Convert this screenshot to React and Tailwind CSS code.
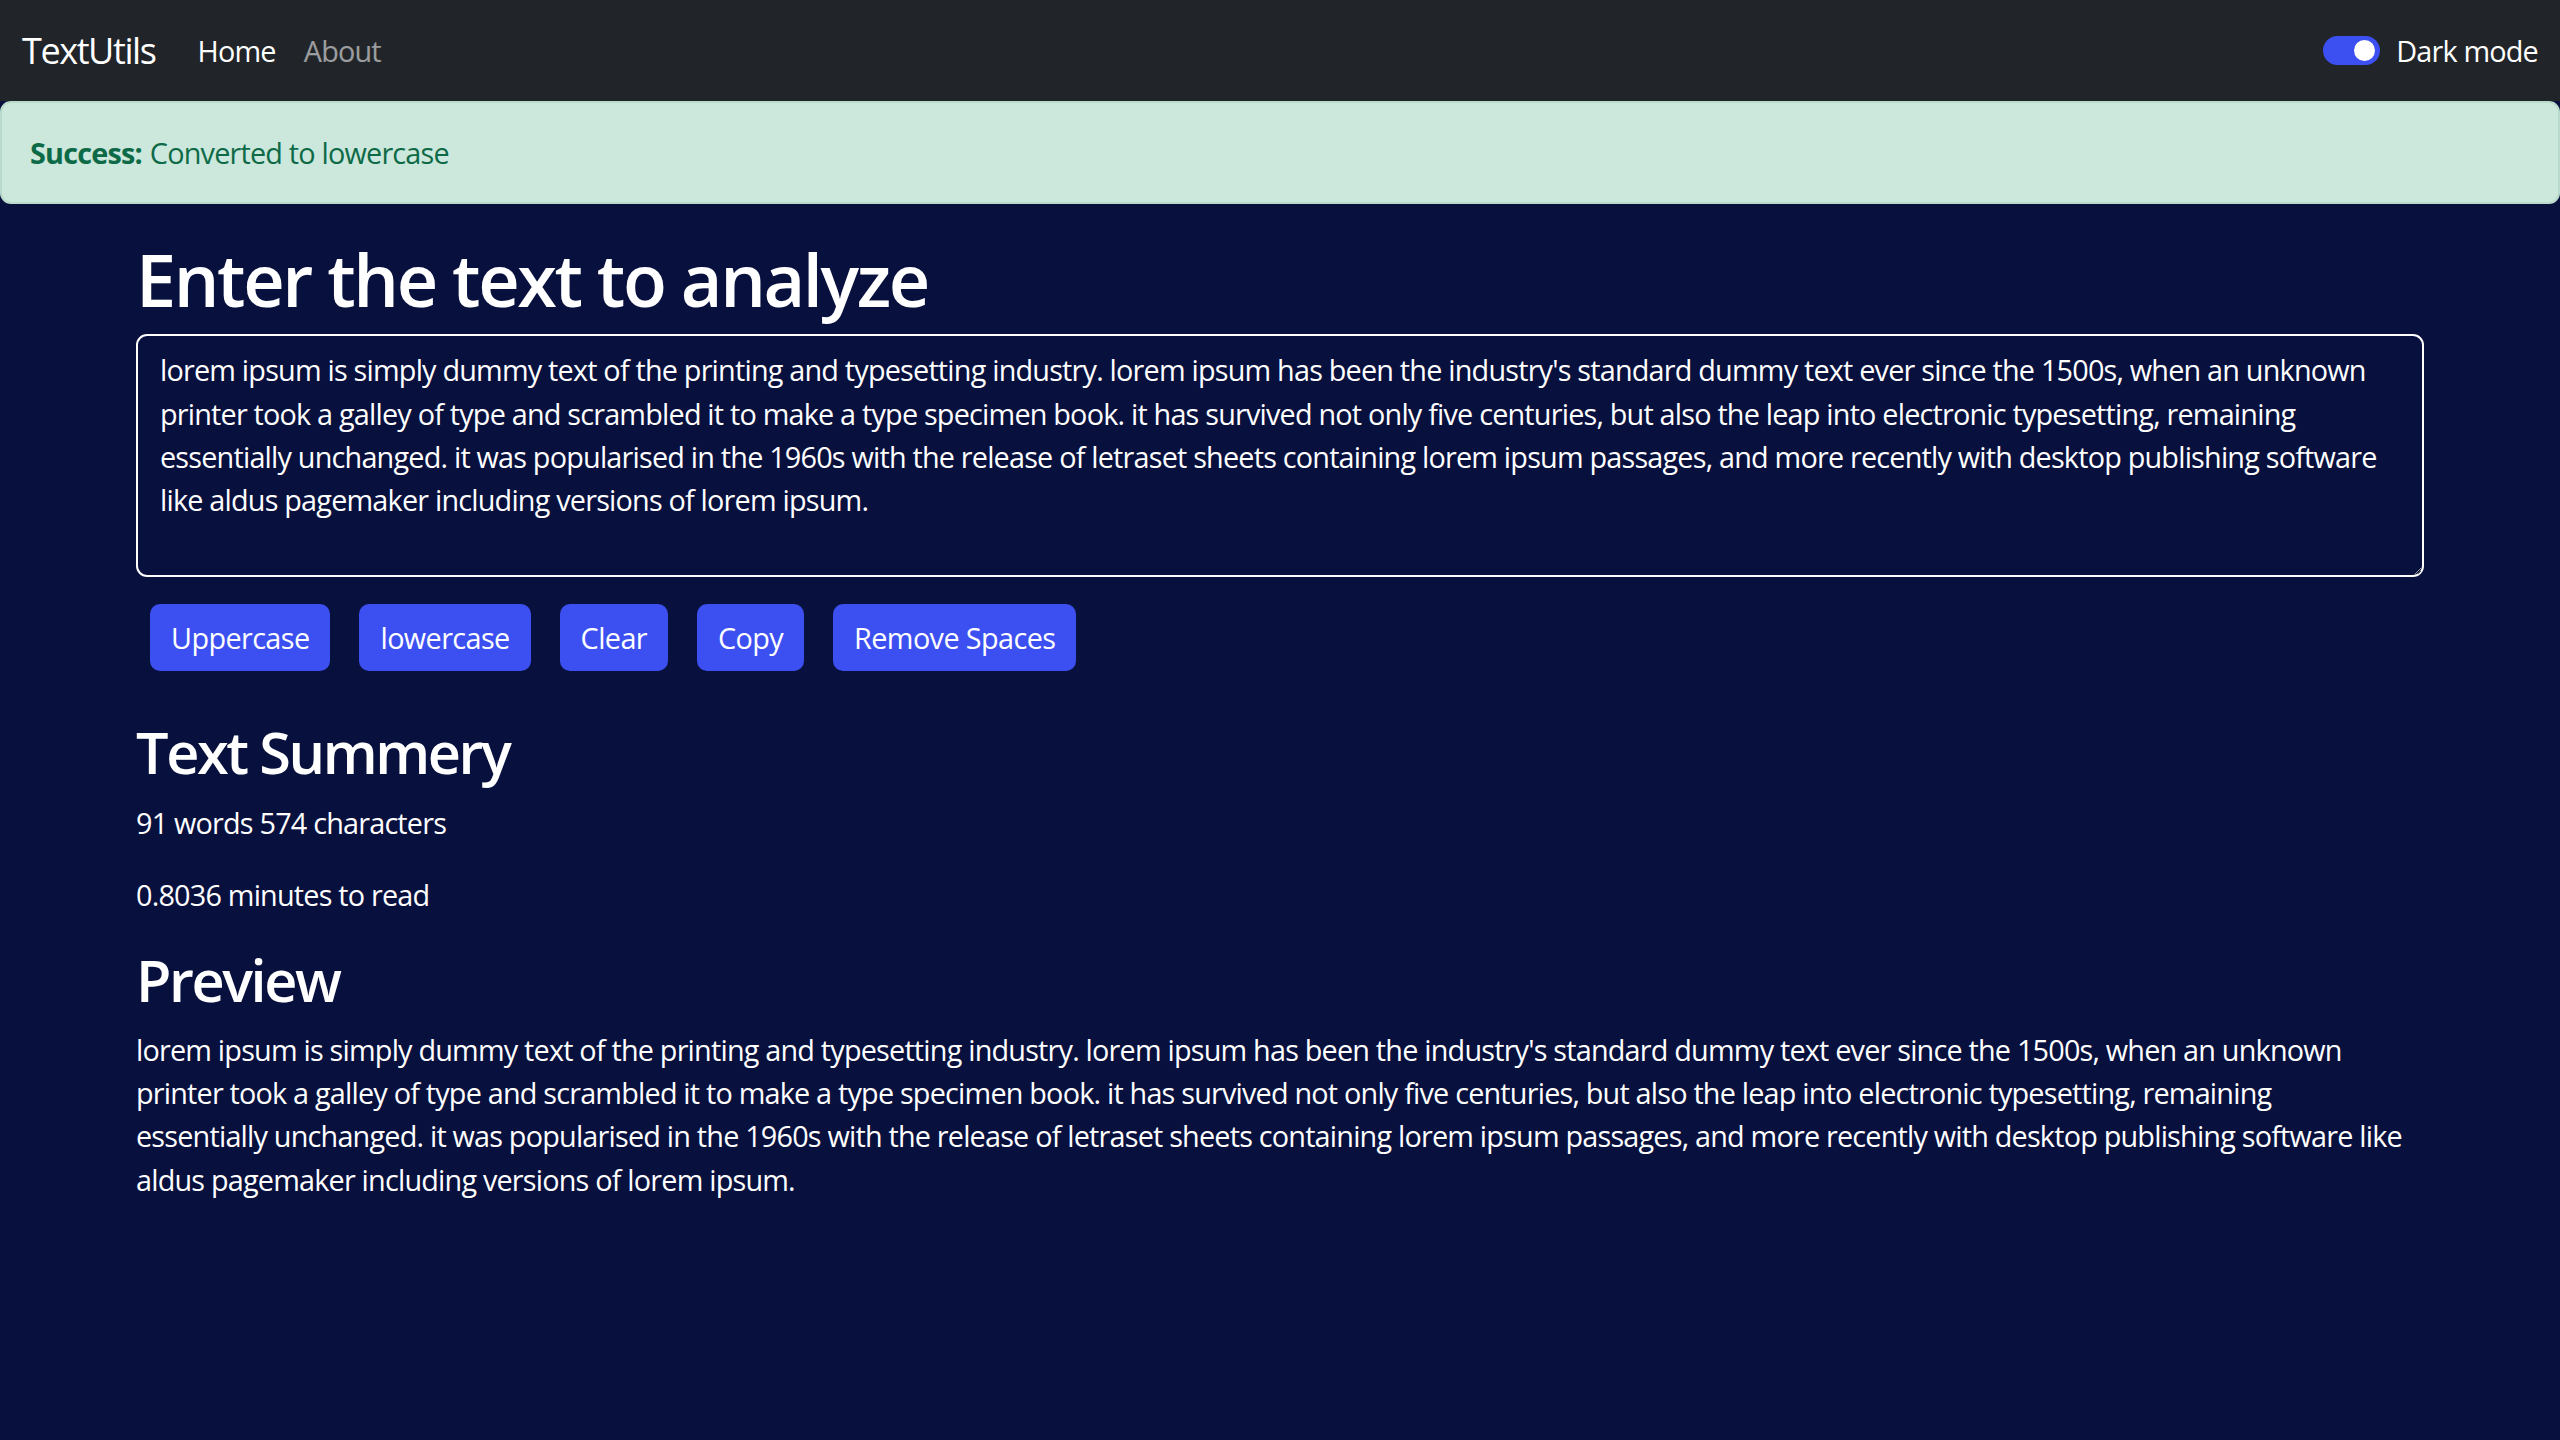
import { useState } from "react";

const LOREM =
  "lorem ipsum is simply dummy text of the printing and typesetting industry. lorem ipsum has been the industry's standard dummy text ever since the 1500s, when an unknown printer took a galley of type and scrambled it to make a type specimen book. it has survived not only five centuries, but also the leap into electronic typesetting, remaining essentially unchanged. it was popularised in the 1960s with the release of letraset sheets containing lorem ipsum passages, and more recently with desktop publishing software like aldus pagemaker including versions of lorem ipsum.";

const BUTTONS = ["Uppercase", "lowercase", "Clear", "Copy", "Remove Spaces"];

function Navbar() {
  return (
    <nav className="flex h-[101px] items-center justify-between bg-[#212529] px-[22px]">
      <div className="flex items-center">
        <a className="mr-[28px] text-[36px] leading-none tracking-[-1.4px] text-white">TextUtils</a>
        <a className="px-[14px] text-[28.8px] tracking-[-0.8px] text-white">Home</a>
        <a className="px-[14px] text-[28.8px] tracking-[-0.8px] text-white/55">About</a>
      </div>
      <label className="flex items-center gap-[16px] text-[28.8px] tracking-[-0.8px] text-white">
        <span className="relative inline-flex h-[29px] w-[57px] items-center rounded-full bg-[#3c50f2]">
          <span className="absolute right-[5px] h-[21px] w-[21px] rounded-full bg-white" />
        </span>
        Dark mode
      </label>
    </nav>
  );
}

export default function App() {
  const [text, setText] = useState(LOREM);
  const words = text.split(/\s+/).filter((w) => w.length > 0).length;

  return (
    <div className="min-h-screen bg-[#08103e] font-['Open_Sans',sans-serif] text-white">
      <Navbar />
      <div className="flex h-[103px] items-center rounded-[11px] border-2 border-[#badbcc] bg-[#cce7dc] px-[28px] text-[28.8px] tracking-[-0.8px] text-[#0d6a47]">
        <strong className="mr-[8px] font-bold">Success:</strong>
        Converted to lowercase
      </div>

      <div className="ml-[136px] mt-[32px] w-[2288px]">
        <h1 className="mb-[12px] text-[72px] font-semibold leading-[1.2] tracking-[-2.4px]">
          Enter the text to analyze
        </h1>
        <textarea
          value={text}
          onChange={(e) => setText(e.target.value)}
          className="block h-[243px] w-full rounded-[11px] border-2 border-white bg-[#08103e] px-[22px] py-[12px] text-[28.8px] leading-[1.5] tracking-[-0.8px] text-white outline-none"
        />
        <div className="mt-[27px] flex gap-[29px] pl-[14px]">
          {BUTTONS.map((b) => (
            <button
              key={b}
              type="button"
              className="h-[67px] rounded-[10px] bg-[#3c50f2] px-[21px] text-[28.8px] tracking-[-0.6px] text-white"
            >
              {b}
            </button>
          ))}
        </div>

        <div className="mt-[46px]">
          <h2 className="mb-[14px] text-[57.6px] font-semibold leading-[1.2] tracking-[-2.4px]">
            Text Summery
          </h2>
          <p className="mb-[29px] text-[28.8px] leading-[1.5] tracking-[-0.8px]">
            {words} words {text.length} characters
          </p>
          <p className="mb-[29px] text-[28.8px] leading-[1.5] tracking-[-0.8px]">
            0.8036 minutes to read
          </p>
          <h2 className="mb-[14px] text-[57.6px] font-semibold leading-[1.2] tracking-[-2.4px]">
            Preview
          </h2>
          <p className="w-[2270px] text-[28.8px] leading-[1.5] tracking-[-0.8px]">{text}</p>
        </div>
      </div>
    </div>
  );
}
